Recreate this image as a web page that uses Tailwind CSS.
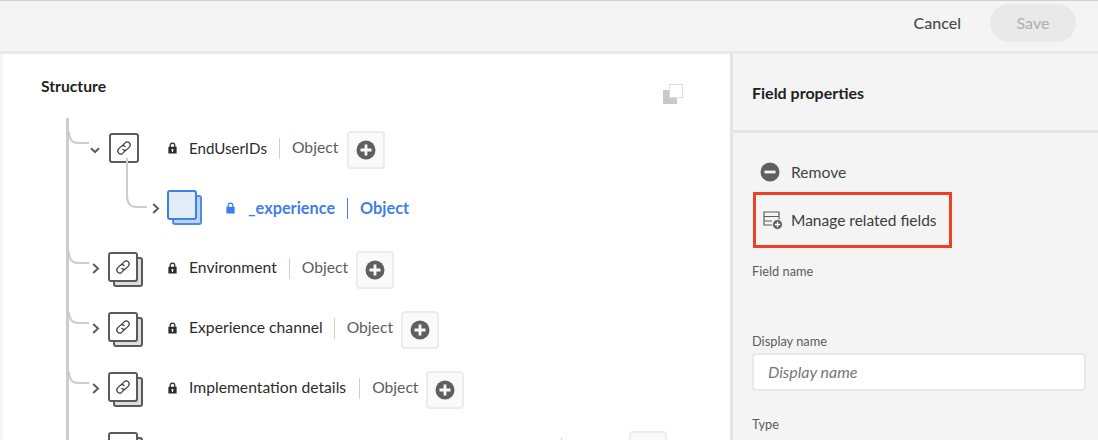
<!DOCTYPE html>
<html>
<head>
    <title>Field properties</title>
    <script src="https://cdn.jsdelivr.net/npm/@tailwindcss/browser@4"></script>
</head>
<body class="bg-[#f4f4f4] text-[#2c2c2c] font-['Lato','Liberation_Sans',sans-serif]">
    <svg width="0" height="0" class="absolute">
        <symbol id="link" viewBox="0 0 18 18">
            <g fill="none" stroke="#3a3a3a" stroke-width="1.2" stroke-linecap="round">
                <path d="M7.600 6.400 10.400 3.600a3 3 0 0 1 4.200 4.200l-2.600 2.600a3 3 0 0 1-4.200 0"/>
                <path d="M10.400 11.600 7.600 14.400a3 3 0 0 1-4.200-4.200L6 7.600a3 3 0 0 1 4.200 0"/>
            </g>
        </symbol>
        <symbol id="lock" viewBox="0 0 12 13">
            <path fill="#2c2c2c" d="M2.800 5V3.600a3.200 3.200 0 0 1 6.400 0V5h1.300v7.400h-9V5zm1.400 0h3.600V3.600a1.800 1.800 0 0 0-3.600 0zM6 7.400a1.200 1.200 0 0 0-.6 2.200v1.200h1.200V9.600A1.200 1.200 0 0 0 6 7.400z" fill-rule="evenodd"/>
        </symbol>
        <symbol id="plus" viewBox="0 0 20 20">
            <circle cx="10" cy="10" r="9.500" fill="#5f5f5f"/>
            <path d="M10 4.500v11M4.500 10h11" stroke="#f8f8f8" stroke-width="2.800"/>
        </symbol>
    </svg>

    <div class="h-[440px] overflow-hidden flex flex-col">
        <!-- Top bar -->
        <header class="h-[54px] shrink-0 border-t border-t-[#cfcfcf] border-b-[3px] border-b-[#e9e9e9] flex items-start justify-end pt-[3px] pr-[22px]">
            <button class="h-[38px] mr-[29px] text-[16px] font-medium text-[#4b4b4b]">Cancel</button>
            <button class="h-[38px] w-[86px] rounded-full bg-[#e9e9e9] text-[16px] font-medium text-[#b1b1b1]">Save</button>
        </header>

        <div class="flex flex-1 min-h-0">
            <!-- Structure panel -->
            <main class="w-[727px] ml-[3px] bg-white overflow-hidden relative">
                <div class="flex items-center justify-between h-[64px] pl-[38px] pr-[46px]">
                    <h2 class="pt-[2px] text-[15.7px] font-bold text-[#1f1f1f]">Structure</h2>
                    <svg width="21" height="21" viewBox="0 0 21 21" class="mt-[16px]">
                        <path d="M0 6h6v8h8v6H0z" fill="#c9c9c9"/>
                        <rect x="6.500" y="0.500" width="13" height="13" fill="#fff" stroke="#b9b9b9" stroke-dasharray="1 1"/>
                    </svg>
                </div>

                <div class="ml-[63px] border-l-[3px] border-l-[#cdcdcd]">
                    <!-- EndUserIDs -->
                    <div class="h-[60px] flex items-center relative">
                        <svg width="22" height="18" viewBox="0 0 22 18" class="-mt-[14px] shrink-0">
                            <path d="M0 0c0 8 4 11 10 11h10" fill="none" stroke="#cdcdcd" stroke-width="2"/>
                        </svg>
                        <svg width="10" height="7" viewBox="0 0 10 7" class="mt-[5px] ml-[-1px] shrink-0"><path d="M1 1.200 5 5l4-3.800" fill="none" stroke="#5c5c5c" stroke-width="2"/></svg>
                        <div class="ml-[9px] w-[30px] h-[30px] rounded-[3px] border-2 border-[#5a5a5a] bg-white flex items-center justify-center shrink-0">
                            <svg width="18" height="18"><use href="#link"/></svg>
                        </div>
                        <svg width="11" height="12" class="ml-[28px] shrink-0"><use href="#lock"/></svg>
                        <span class="ml-[11px] text-[15.1px]">EndUserIDs</span>
                        <span class="ml-[12px] h-[21px] border-l border-l-[#cfcfcf]"></span>
                        <span class="ml-[12px] text-[15.7px] text-[#5d5d5d]">Object</span>
                        <button class="ml-[9px] mt-[4px] w-[38px] h-[38px] rounded-[4px] border-2 border-[#ececec] bg-[#fafafa] flex items-center justify-center"><svg width="20" height="20"><use href="#plus"/></svg></button>
                    </div>
                    <!-- _experience -->
                    <div class="h-[60px] flex items-center relative pl-[59px]">
                        <svg width="22" height="52" viewBox="0 0 22 52" class="absolute left-[56px] bottom-[28px]">
                            <path d="M2 0v38c0 8 4 11 10 11h10" fill="none" stroke="#cdcdcd" stroke-width="2"/>
                        </svg>
                        <svg width="8" height="11" viewBox="0 0 8 11" class="ml-[24px] shrink-0"><path d="M1.200 1 6 5.500 1.200 10" fill="none" stroke="#5c5c5c" stroke-width="2"/></svg>
                        <div class="relative ml-[7px] w-[36px] h-[36px] shrink-0">
                            <div class="absolute left-[5px] top-[5px] w-[30px] h-[30px] rounded-[3px] border-2 border-[#4f8ae8] bg-[#bcd3f4]"></div>
                            <div class="absolute left-0 top-0 w-[30px] h-[30px] rounded-[3px] border-2 border-[#3f80e6] bg-[#e2ebf8]"></div>
                        </div>
                        <svg width="11" height="12" viewBox="0 0 12 13" class="ml-[22px] shrink-0"><path fill="#3f7fe4" d="M2.800 5V3.600a3.200 3.200 0 0 1 6.400 0V5h1.300v7.400h-9V5zm1.400 0h3.600V3.600a1.800 1.800 0 0 0-3.600 0z" fill-rule="evenodd"/></svg>
                        <span class="ml-[12px] text-[16.300px] font-bold text-[#3f7fe4]">_experience</span>
                        <span class="ml-[12px] h-[21px] border-l border-l-[#3f7fe4]"></span>
                        <span class="ml-[12px] text-[16.300px] font-bold text-[#3f7fe4]">Object</span>
                    </div>
                    <!-- Environment -->
                    <div class="h-[60px] flex items-center">
                        <svg width="23" height="18" viewBox="0 0 23 18" class="-mt-[14px] shrink-0"><path d="M0 0c0 8 4 11 10 11h10" fill="none" stroke="#cdcdcd" stroke-width="2"/></svg>
                        <svg width="8" height="11" viewBox="0 0 8 11" class="shrink-0"><path d="M1.200 1 6 5.500 1.200 10" fill="none" stroke="#5c5c5c" stroke-width="2"/></svg>
                        <div class="relative ml-[8px] w-[36px] h-[36px] shrink-0 mt-[4px]">
                            <div class="absolute left-[5px] top-[5px] w-[30px] h-[30px] rounded-[3px] border-2 border-[#5a5a5a] bg-[#dedede]"></div>
                            <div class="absolute left-0 top-0 w-[30px] h-[30px] rounded-[3px] border-2 border-[#5a5a5a] bg-white flex items-center justify-center"><svg width="18" height="18"><use href="#link"/></svg></div>
                        </div>
                        <svg width="11" height="12" class="ml-[23px] shrink-0"><use href="#lock"/></svg>
                        <span class="ml-[11px] text-[15.7px]">Environment</span>
                        <span class="ml-[12px] h-[21px] border-l border-l-[#cfcfcf]"></span>
                        <span class="ml-[12px] text-[15.7px] text-[#5d5d5d]">Object</span>
                        <button class="ml-[8px] mt-[4px] w-[38px] h-[38px] rounded-[4px] border-2 border-[#ececec] bg-[#fafafa] flex items-center justify-center"><svg width="20" height="20"><use href="#plus"/></svg></button>
                    </div>
                    <!-- Experience channel -->
                    <div class="h-[60px] flex items-center">
                        <svg width="23" height="18" viewBox="0 0 23 18" class="-mt-[14px] shrink-0"><path d="M0 0c0 8 4 11 10 11h10" fill="none" stroke="#cdcdcd" stroke-width="2"/></svg>
                        <svg width="8" height="11" viewBox="0 0 8 11" class="shrink-0"><path d="M1.200 1 6 5.500 1.200 10" fill="none" stroke="#5c5c5c" stroke-width="2"/></svg>
                        <div class="relative ml-[8px] w-[36px] h-[36px] shrink-0 mt-[4px]">
                            <div class="absolute left-[5px] top-[5px] w-[30px] h-[30px] rounded-[3px] border-2 border-[#5a5a5a] bg-[#dedede]"></div>
                            <div class="absolute left-0 top-0 w-[30px] h-[30px] rounded-[3px] border-2 border-[#5a5a5a] bg-white flex items-center justify-center"><svg width="18" height="18"><use href="#link"/></svg></div>
                        </div>
                        <svg width="11" height="12" class="ml-[23px] shrink-0"><use href="#lock"/></svg>
                        <span class="ml-[11px] text-[15.7px]">Experience channel</span>
                        <span class="ml-[11px] h-[21px] border-l border-l-[#cfcfcf]"></span>
                        <span class="ml-[12px] text-[15.7px] text-[#5d5d5d]">Object</span>
                        <button class="ml-[8px] mt-[4px] w-[38px] h-[38px] rounded-[4px] border-2 border-[#ececec] bg-[#fafafa] flex items-center justify-center"><svg width="20" height="20"><use href="#plus"/></svg></button>
                    </div>
                    <!-- Implementation details -->
                    <div class="h-[60px] flex items-center">
                        <svg width="23" height="18" viewBox="0 0 23 18" class="-mt-[14px] shrink-0"><path d="M0 0c0 8 4 11 10 11h10" fill="none" stroke="#cdcdcd" stroke-width="2"/></svg>
                        <svg width="8" height="11" viewBox="0 0 8 11" class="shrink-0"><path d="M1.200 1 6 5.500 1.200 10" fill="none" stroke="#5c5c5c" stroke-width="2"/></svg>
                        <div class="relative ml-[8px] w-[36px] h-[36px] shrink-0 mt-[4px]">
                            <div class="absolute left-[5px] top-[5px] w-[30px] h-[30px] rounded-[3px] border-2 border-[#5a5a5a] bg-[#dedede]"></div>
                            <div class="absolute left-0 top-0 w-[30px] h-[30px] rounded-[3px] border-2 border-[#5a5a5a] bg-white flex items-center justify-center"><svg width="18" height="18"><use href="#link"/></svg></div>
                        </div>
                        <svg width="11" height="12" class="ml-[23px] shrink-0"><use href="#lock"/></svg>
                        <span class="ml-[11px] text-[15.7px]">Implementation details</span>
                        <span class="ml-[13px] h-[21px] border-l border-l-[#cfcfcf]"></span>
                        <span class="ml-[12px] text-[15.7px] text-[#5d5d5d]">Object</span>
                        <button class="ml-[7px] mt-[4px] w-[38px] h-[38px] rounded-[4px] border-2 border-[#ececec] bg-[#fafafa] flex items-center justify-center"><svg width="20" height="20"><use href="#plus"/></svg></button>
                    </div>
                    <!-- Row cut off by the window -->
                    <div class="h-[60px] flex items-center">
                        <div class="ml-[39px] relative w-[36px] h-[36px] shrink-0 mt-[4px]">
                            <div class="absolute left-[5px] top-[5px] w-[30px] h-[30px] rounded-[3px] border-2 border-[#5a5a5a] bg-[#dedede]"></div>
                            <div class="absolute left-0 top-0 w-[30px] h-[30px] rounded-[3px] border-2 border-[#5a5a5a] bg-white"></div>
                        </div>
                        <span class="ml-[417px] h-[21px] border-l border-l-[#cfcfcf]"></span>
                        <button class="ml-[67px] mt-[4px] w-[38px] h-[38px] rounded-[4px] border-2 border-[#ececec] bg-[#fafafa]"></button>
                    </div>
                </div>
            </main>

            <!-- Field properties panel -->
            <aside class="flex-1 border-l-[3px] border-l-[#e4e4e4] min-w-0">
                <div class="h-[79px] flex items-center pl-[19px] pt-[1px] border-b-[3px] border-b-[#e4e4e4]">
                    <h2 class="text-[16px] font-bold text-[#1f1f1f]">Field properties</h2>
                </div>
                <div class="pl-[19px] pr-[12px]">
                    <div class="h-[40px] mt-[19px] flex items-center">
                        <svg width="20" height="20" viewBox="0 0 20 20" class="ml-[8px] shrink-0"><circle cx="10" cy="10" r="9.500" fill="#5f5f5f"/><path d="M4.500 10h11" stroke="#f4f4f4" stroke-width="2.800"/></svg>
                        <span class="ml-[11px] pt-[2px] text-[15.7px] text-[#444]">Remove</span>
                    </div>
                    <div class="ml-[1px] w-[199px] h-[56px] border-[3px] border-[#ee4025] flex items-center">
                        <svg width="20" height="20" viewBox="0 0 20 20" class="ml-[7px] shrink-0">
                            <path d="M1 2h15v13H1zM1 6.500h15M1 11h8" fill="none" stroke="#5f5f5f" stroke-width="1.200"/>
                            <circle cx="14.500" cy="14.500" r="5" fill="#5f5f5f" stroke="#f4f4f4"/>
                            <path d="M14.500 11.800v5.400M11.800 14.500h5.400" stroke="#fff" stroke-width="1.300"/>
                        </svg>
                        <span class="ml-[8px] pt-[1px] text-[15.500px] text-[#3c3c3c] whitespace-nowrap">Manage related fields</span>
                    </div>
                    <label class="block mt-[14px] text-[12.800px] leading-[18px] text-[#5c5c5c]">Field name</label>
                    <label class="block mt-[52px] text-[12.800px] leading-[18px] text-[#5c5c5c]">Display name</label>
                    <input placeholder="Display name" class="block mt-[3px] w-[334px] h-[38px] px-[14px] pb-[2px] rounded-[4px] border-2 border-[#e8e8e8] bg-white text-[16px] italic placeholder:text-[#777]">
                    <label class="block mt-[24px] text-[12.800px] leading-[18px] text-[#5c5c5c]">Type</label>
                </div>
            </aside>
        </div>
    </div>
</body>
</html>
